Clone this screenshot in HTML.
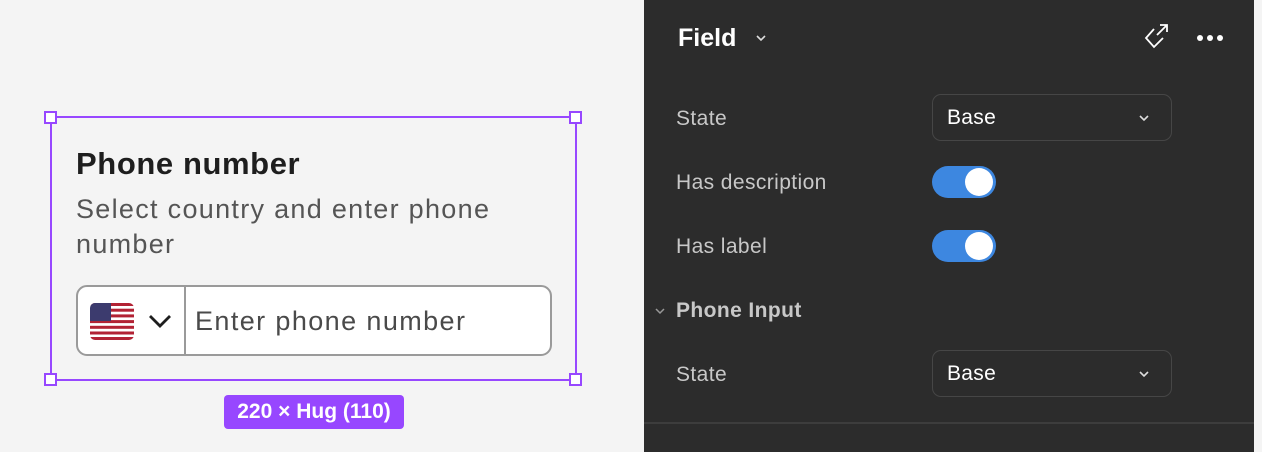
<!DOCTYPE html>
<html><head><style>
*{margin:0;padding:0;box-sizing:border-box}
body{width:1262px;height:452px;background:#f4f4f4;position:relative;overflow:hidden;font-family:"Liberation Sans",sans-serif}
.abs{position:absolute}
.h{position:absolute;width:13px;height:13px;border:2px solid #9747ff;background:#fff}
.lbl{position:absolute;left:676px;font-size:21px;color:#c8c8c8;letter-spacing:0.4px}
.sel{position:absolute;left:932px;width:240px;height:47px;border:1.5px solid #464646;border-radius:9px;color:#fff;font-size:21px;padding:11px 0 0 14px;letter-spacing:0.3px}
.sel svg{position:absolute;right:22px;top:20px}
.tg{position:absolute;left:932px;width:64px;height:32px;border-radius:16px;background:#3d87e0}
.tg::after{content:"";position:absolute;right:3px;top:2px;width:28px;height:28px;border-radius:50%;background:#fff}
</style></head><body>
<div class="abs" style="left:50px;top:116px;width:527px;height:265px;border:2px solid #9747ff"></div>
<div class="h" style="left:44px;top:111px"></div>
<div class="h" style="left:569px;top:111px"></div>
<div class="h" style="left:44px;top:373px"></div>
<div class="h" style="left:569px;top:373px"></div>
<div class="abs" style="left:76px;top:146px;font-size:31px;font-weight:bold;color:#1e1e1e;letter-spacing:0.6px">Phone number</div>
<div class="abs" style="left:76px;top:192px;width:480px;font-size:27px;line-height:35px;color:#555;letter-spacing:1.3px">Select country and enter phone number</div>
<div class="abs" style="left:76px;top:285px;width:476px;height:71px;border:2px solid #9a9a9a;border-radius:11px;background:#fff">
 <svg class="abs" style="left:12px;top:16px" width="44" height="37" viewBox="0 0 44 37">
  <defs><clipPath id="c"><rect width="44" height="37" rx="5"/></clipPath></defs>
  <g clip-path="url(#c)">
   <rect width="44" height="37" fill="#fff"/>
   <g fill="#b22234"><rect y="0" width="44" height="3"/><rect y="5.7" width="44" height="3"/><rect y="11.4" width="44" height="3"/><rect y="17.1" width="44" height="3"/><rect y="22.8" width="44" height="3"/><rect y="28.5" width="44" height="3"/><rect y="34" width="44" height="3"/></g>
   <rect width="21" height="18" fill="#3c3b6e"/>
  </g>
 </svg>
 <svg class="abs" style="left:70px;top:26px" width="24" height="16" viewBox="0 0 24 16"><path d="M2 3l10 10 10-10" fill="none" stroke="#1e1e1e" stroke-width="2.8"/></svg>
 <div class="abs" style="left:106px;top:0;width:2px;height:67px;background:#9a9a9a"></div>
 <div class="abs" style="left:117px;top:19px;font-size:27px;color:#4a4a4a;letter-spacing:1.4px">Enter phone number</div>
</div>
<div class="abs" style="left:224px;top:395px;width:180px;height:34px;background:#9747ff;border-radius:4px;color:#fff;font-size:21px;text-align:center;line-height:34px;font-weight:bold">220 × Hug (110)</div>

<div class="abs" style="left:644px;top:0;width:610px;height:452px;background:#2c2c2c"></div>
<div class="abs" style="left:644px;top:422px;width:610px;height:2px;background:#3d3d3d"></div>
<div class="abs" style="left:678px;top:24px;font-size:25px;font-weight:bold;color:#fff">Field</div>
<svg class="abs" style="left:755px;top:34px" width="12" height="8"><path d="M2 2l4 4 4-4" fill="none" stroke="#ddd" stroke-width="1.6"/></svg>
<svg class="abs" style="left:1142px;top:24px" width="28" height="28" viewBox="0 0 28 28"><path d="M12 5L4 14l8 9 9-9" fill="none" stroke="#fff" stroke-width="1.8"/><path d="M15 11l10-10M18 1h7v7" fill="none" stroke="#fff" stroke-width="1.8"/></svg>
<div class="abs" style="left:1197px;top:35px;width:6px;height:6px;border-radius:50%;background:#fff;box-shadow:10px 0 #fff,20px 0 #fff"></div>

<div class="lbl" style="top:107px">State</div>
<div class="sel" style="top:94px">Base<svg width="10" height="7"><path d="M1 1l4 4 4-4" fill="none" stroke="#ddd" stroke-width="1.6"/></svg></div>
<div class="lbl" style="top:171px">Has description</div>
<div class="tg" style="top:166px"></div>
<div class="lbl" style="top:235px">Has label</div>
<div class="tg" style="top:230px"></div>
<svg class="abs" style="left:654px;top:307px" width="12" height="8"><path d="M2 2l4 4 4-4" fill="none" stroke="#999" stroke-width="1.5"/></svg>
<div class="lbl" style="top:299px;font-weight:bold;color:#c8c8c8">Phone Input</div>
<div class="lbl" style="top:363px">State</div>
<div class="sel" style="top:350px">Base<svg width="10" height="7"><path d="M1 1l4 4 4-4" fill="none" stroke="#ddd" stroke-width="1.6"/></svg></div>
</body></html>
